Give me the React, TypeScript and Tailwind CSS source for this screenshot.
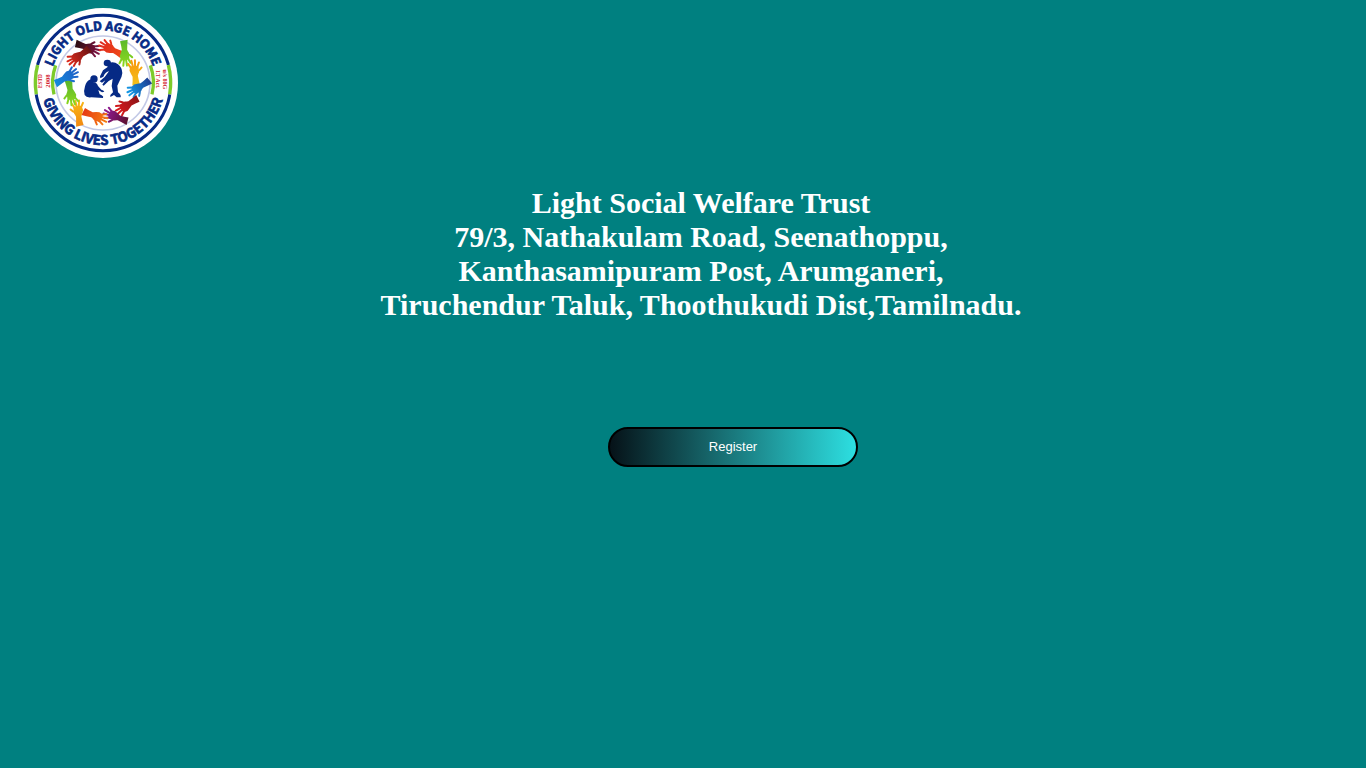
type HandProps = { x: number; y: number; angle: number; from: string; to: string; flip?: boolean; id: string };

const hands: HandProps[] = [
  { id: "maroon", x: 168, y: 130, angle: 20, from: "#2a0d12", to: "#7c1240" },
  { id: "vermilion", x: 307, y: 164, angle: 206, from: "#f04a18", to: "#e02a1c", flip: true },
  { id: "lime", x: 312, y: 122, angle: 87, from: "#5cba2c", to: "#8ad61e" },
  { id: "amber", x: 349, y: 256, angle: 263, from: "#f4c21c", to: "#f79a0c", flip: true },
  { id: "azure", x: 389, y: 242, angle: 148, from: "#1d3f94", to: "#1597e4" },
  { id: "scarlet", x: 353, y: 295, angle: 147, from: "#8f1418", to: "#d61a1c", flip: true },
  { id: "plum", x: 322, y: 364, angle: 202, from: "#5c1030", to: "#8e1a90" },
  { id: "orange", x: 190, y: 335, angle: 20, from: "#e63a14", to: "#f47a12", flip: true },
  { id: "gold", x: 179, y: 377, angle: 264, from: "#f28a12", to: "#f8b414" },
  { id: "green", x: 145, y: 241, angle: 79, from: "#58b52c", to: "#8ad61e", flip: true },
  { id: "blue", x: 107, y: 251, angle: 329, from: "#1489dc", to: "#1d62c8", flip: true },
  { id: "red", x: 208, y: 147, angle: 146, from: "#6c1414", to: "#d92a1c" },
];

function Hand({ id, x, y, angle, from, to, flip }: HandProps) {
  return (
    <g transform={`translate(${x} ${y}) rotate(${angle}) scale(1 ${flip ? -1 : 1})`}>
      <linearGradient id={id} gradientUnits="userSpaceOnUse" x1="0" y1="0" x2="70" y2="0">
        <stop offset="0" stopColor={from} />
        <stop offset="1" stopColor={to} />
      </linearGradient>
      <g fill={`url(#${id})`} stroke={`url(#${id})`} strokeLinecap="round">
        <path
          strokeWidth="0"
          d="M-2 -11 Q14 -9 28 -8 Q34 -10 38 -13 L55 -13 Q62 -4 58 12 L46 15 Q36 12 27 8 Q14 9 1 12 Z"
        />
        <path strokeWidth="6" fill="none" d="M40 -8 Q44 -16 51 -22 M53 -9 L67 -16 M55 -3 L75 -5 M55 3 L75 6 M53 9 L67 17" />
      </g>
    </g>
  );
}

function Logo() {
  return (
    <svg viewBox="24 24 450 450" className="size-[150px] shrink-0" role="img" aria-label="Light Old Age Home">
      <defs>
        <path id="upper" d="M91 249 A158 158 0 0 1 407 249" />
        <path id="lower" d="M63 249 A186 186 0 0 0 435 249" />
      </defs>
      <circle cx="249" cy="249" r="225" fill="#fff" />
      <circle cx="249" cy="249" r="141" fill="none" stroke="#c3c9e6" strokeWidth="5" />
      <circle cx="249" cy="249" r="203" fill="none" stroke="#062a85" strokeWidth="9" />
      <g fill="none">
        <path stroke="#fff" strokeWidth="12" d="M53 195 A203 203 0 0 0 49 283 M445 195 A203 203 0 0 1 449 283" />
        <path stroke="#7dcb2b" strokeWidth="10" d="M53 195 A203 203 0 0 0 49 283 M445 195 A203 203 0 0 1 449 283" />
        <path stroke="#7dcb2b" strokeWidth="10" d="M107 196 A151 151 0 0 0 102 283 M391 196 A151 151 0 0 1 396 283" />
      </g>
      <g
        fill="#062a85"
        stroke="#062a85"
        strokeWidth="2"
        fontFamily="'Noto Sans CJK SC', sans-serif"
        fontWeight="700"
        textAnchor="middle"
      >
        <text fontSize="37">
          <textPath href="#upper" startOffset="50%">LIGHT OLD AGE HOME</textPath>
        </text>
        <text fontSize="40">
          <textPath href="#lower" startOffset="50%">GIVING LIVES TOGETHER</textPath>
        </text>
      </g>
      <g fill="#d3222e" fontFamily="'Liberation Serif', serif" fontWeight="700" fontSize="18" textAnchor="middle">
        <text transform="translate(66 243) rotate(-90)" fontSize="16">ESTD</text>
        <text transform="translate(89 243) rotate(-90)" fontSize="20">2008</text>
        <text transform="translate(430 238) rotate(90)">u/s 80G</text>
        <text transform="translate(408 238) rotate(90)" fontSize="17">I.T Act.</text>
      </g>
      {hands.map((hand) => (
        <Hand key={hand.id} {...hand} />
      ))}
      <g fill="#062a85">
        <circle cx="222" cy="237" r="11" />
        <path d="M212 238 Q199 243 195 259 Q190 274 194 285 Q199 294 214 292 L249 294 Q252 290 245 286 L239 283 L235 270 L246 277 L253 275 Q251 270 244 269 L234 258 Q231 248 220 247 Z" />
        <ellipse cx="262" cy="189" rx="11" ry="10" />
        <path d="M265 190 Q281 183 294 193 Q306 202 307 219 Q306 231 299 242 L292 257 L294 277 Q304 284 302 292 L290 292 L282 285 L271 291 L271 285 L279 277 L275 258 L278 236 L266 243 L251 257 L247 254 L256 241 L246 248 L239 244 L254 231 L267 214 Q257 215 250 230 L241 235 L240 229 L249 211 L262 202 Z" />
      </g>
    </svg>
  );
}

export default function App() {
  return (
    <div className="min-h-screen bg-[#008080] pt-2">
      <header className="flex px-7">
        <Logo />
      </header>
      <main className="flex flex-col items-center">
        <h1 className="mt-7 pl-9 text-center font-['Liberation_Serif',serif] text-[30px] leading-[34px] font-bold text-white">
          Light Social Welfare Trust
          <br />
          79/3, Nathakulam Road, Seenathoppu,
          <br />
          Kanthasamipuram Post, Arumganeri,
          <br />
          Tiruchendur Taluk, Thoothukudi Dist,Tamilnadu.
        </h1>
        <div className="mt-[105px] pl-[100px]">
          <button
            type="button"
            className="h-10 w-[250px] cursor-pointer rounded-[20px] border-2 border-black bg-linear-to-r/srgb from-[#061218] to-[#2ddfe1] font-['Liberation_Sans',sans-serif] text-[13px] text-white"
          >
            Register
          </button>
        </div>
      </main>
    </div>
  );
}
